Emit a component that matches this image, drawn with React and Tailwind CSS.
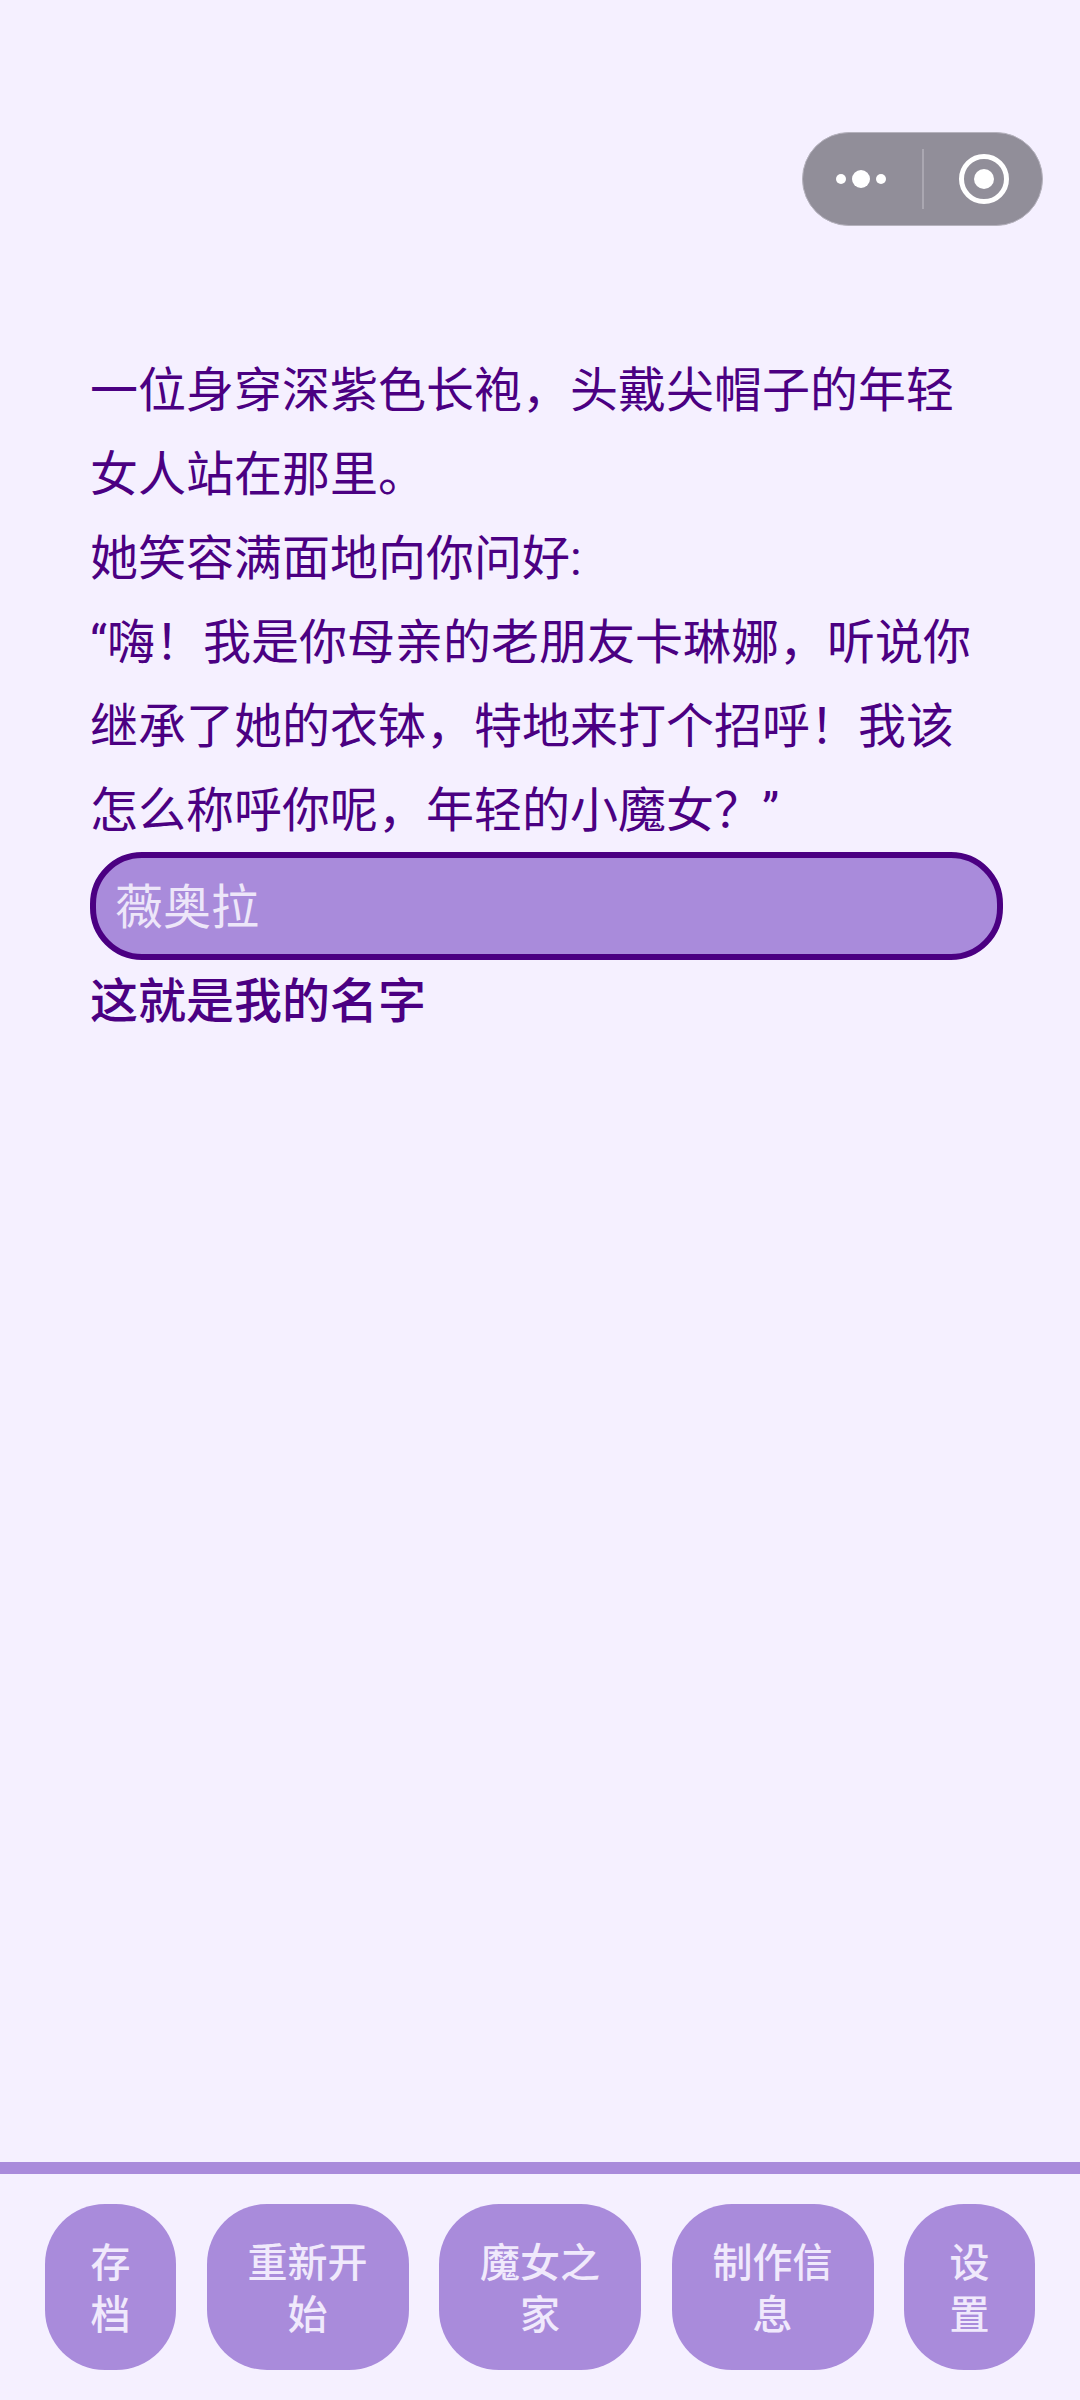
const lines = [
  "一位身穿深紫色长袍，头戴尖帽子的年轻女人站在那里。",
  "她笑容满面地向你问好:",
  "“嗨！我是你母亲的老朋友卡琳娜，听说你继承了她的衣钵，特地来打个招呼！我该怎么称呼你呢，年轻的小魔女？”",
];

const buttons = [
  { label: "存档", width: "w-[131px]" },
  { label: "重新开始", width: "w-[202px]" },
  { label: "魔女之家", width: "w-[202px]" },
  { label: "制作信息", width: "w-[202px]" },
  { label: "设置", width: "w-[131px]" },
];

export default function App() {
  return (
    <div
      lang="zh-CN"
      className="relative flex min-h-[2400px] flex-col bg-[#f5f0ff] font-['Roboto','Noto_Sans_CJK_SC',sans-serif] text-[#4b0082]"
    >
      {/* Mini program capsule */}
      <div className="absolute left-[802px] top-[132px] flex h-[94px] w-[241px] items-center rounded-full border border-[#b5b2bd] bg-[#918e99]">
        <div className="flex w-[119px] items-center justify-center gap-[6px] pr-[4px]">
          <span className="h-[10px] w-[10px] rounded-full bg-white" />
          <span className="h-[18px] w-[18px] rounded-full bg-white" />
          <span className="h-[10px] w-[10px] rounded-full bg-white" />
        </div>
        <div className="h-[60px] w-[2px] bg-[#aaa7b1]" />
        <div className="flex flex-1 items-center justify-center pl-[1px]">
          <div className="flex h-[50px] w-[50px] items-center justify-center rounded-full border-[5px] border-white">
            <span className="h-[20px] w-[20px] rounded-full bg-white" />
          </div>
        </div>
      </div>

      {/* Story */}
      <main className="flex-1 pl-[90px] pr-[77px] pt-[348px]">
        <div className="w-[900px] text-[48px] leading-[84px]">
          {lines.map((line) => (
            <p key={line} className="translate-y-[1px]">{line}</p>
          ))}
        </div>
        <div className="flex h-[108px] items-center rounded-[52px] border-[6px] border-[#4b0082] bg-[#a98bdb] pl-[19px] pt-[3px] text-[48px] text-[#ede6f9]">
          薇奥拉
        </div>
        <button className="block text-[48px] font-medium leading-[84px]">这就是我的名字</button>
      </main>

      {/* Bottom menu */}
      <footer className="flex h-[238px] items-center justify-between border-t-[12px] border-[#a98bdb] px-[45px]">
        {buttons.map((b) => (
          <button
            key={b.label}
            className={`${b.width} flex h-[166px] items-center justify-center rounded-[60px] bg-[#a98bdb] px-[40px] pt-[6px] text-center text-[40px] font-medium leading-[52px] text-[#f0e9fc]`}
          >
            {b.label}
          </button>
        ))}
      </footer>
    </div>
  );
}
